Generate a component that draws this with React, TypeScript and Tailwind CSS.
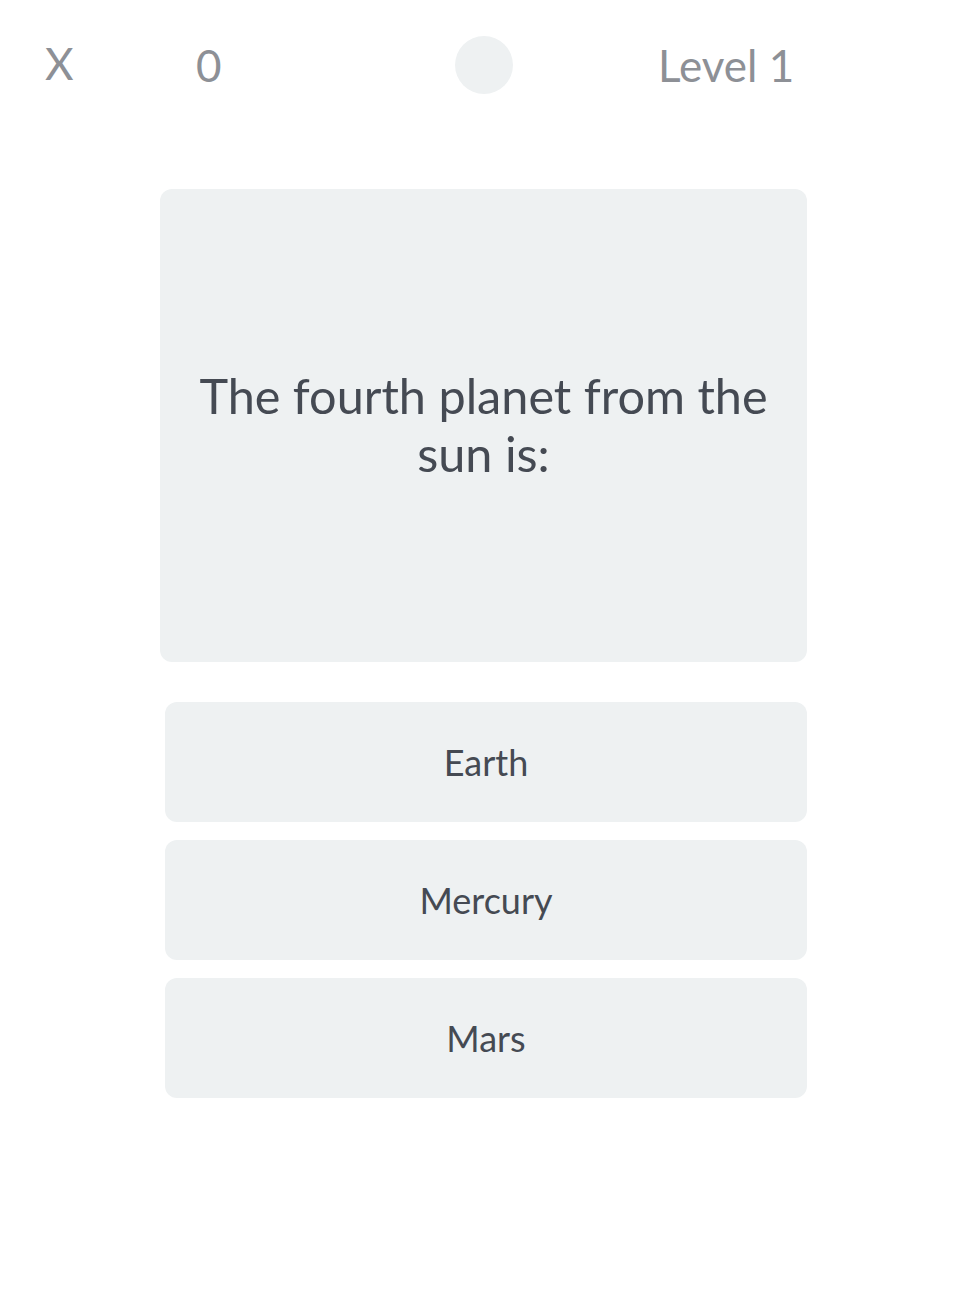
const answers = ["Earth", "Mercury", "Mars"];

const App = () => {
  return (
    <div className="min-h-[1290px] w-full bg-white font-['Lato','Open_Sans',sans-serif]">
      <header className="flex items-center h-[132px] pl-[45px] pb-[6px] text-[44px] leading-none text-[#8d9096]">
        <button className="w-[28px] text-left">X</button>
        <span className="ml-[123px] w-[24px] mt-[4px]">0</span>
        <div className="ml-[235px] w-[58px] h-[58px] rounded-full bg-[#eef1f2] mt-[4px]" />
        <span className="ml-[145px] mt-[4px]">Level 1</span>
      </header>

      <section className="ml-[160px] mr-[161px] mt-[57px] h-[473px] rounded-[12px] bg-[#eef1f2] flex items-center justify-center px-[20px] pb-[4px]">
        <p className="text-center text-[48.6px] leading-[58px] text-[#454a53]">
          The fourth planet from the sun is:
        </p>
      </section>

      <div className="ml-[165px] mr-[161px] mt-[40px] flex flex-col gap-[18px]">
        {answers.map((a) => (
          <button
            key={a}
            className="h-[120px] w-full rounded-[12px] bg-[#eef1f2] text-[36px] text-[#454a53] flex items-center justify-center"
          >
            {a}
          </button>
        ))}
      </div>
    </div>
  );
};

export default App;
